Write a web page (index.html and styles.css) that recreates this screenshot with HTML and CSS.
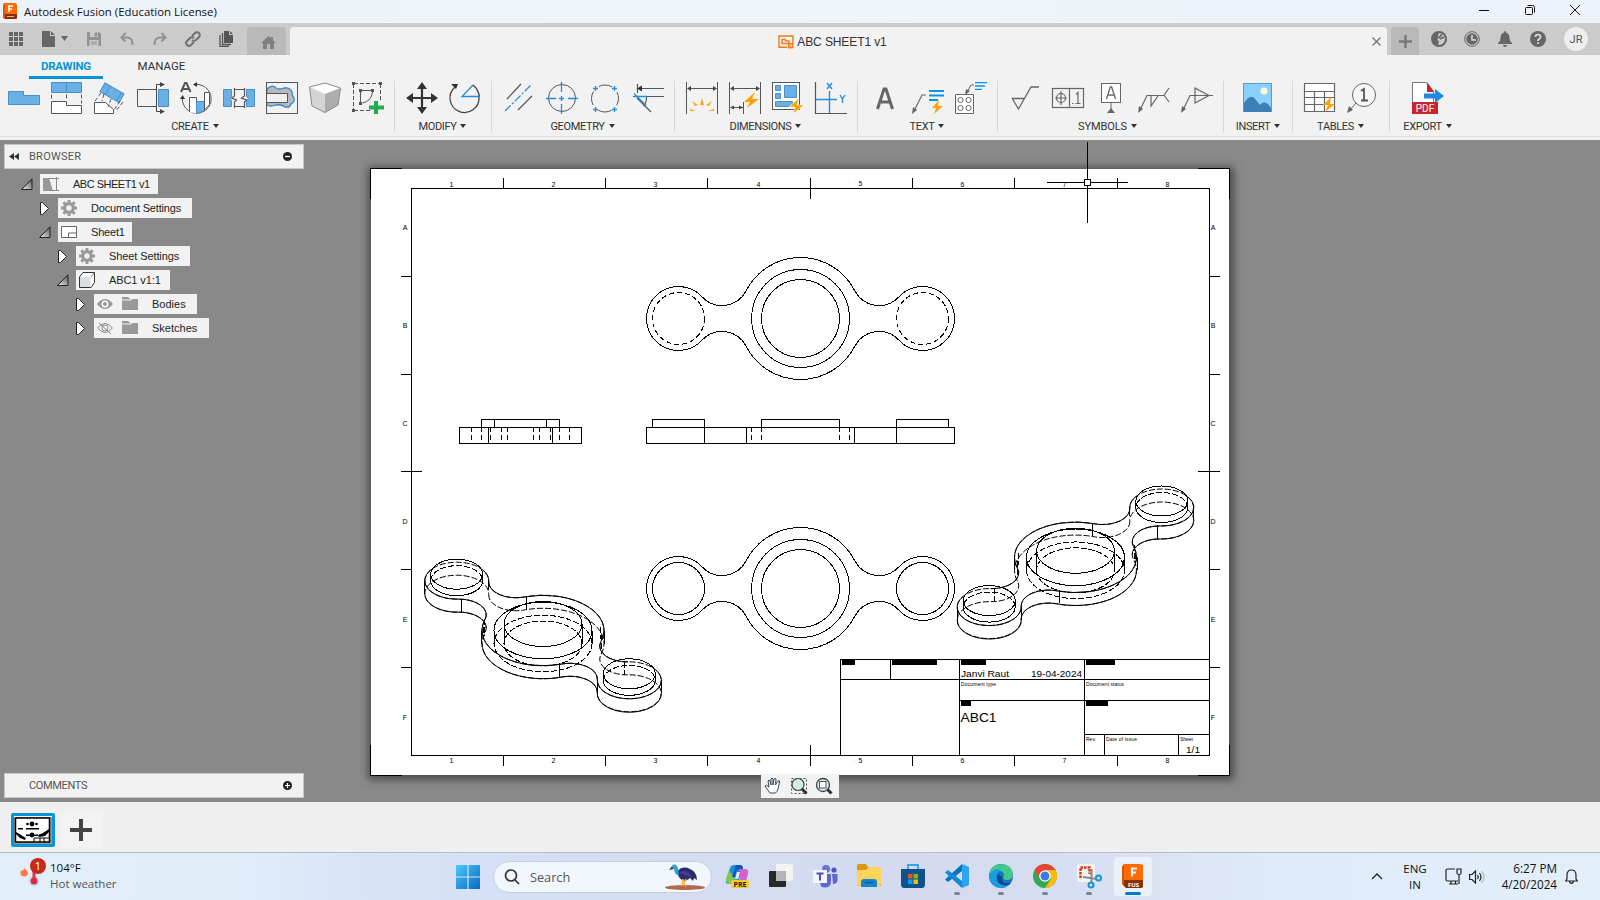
FILE: index.html
```html
<!DOCTYPE html>
<html lang="en">
<head>
<meta charset="utf-8">
<title>Autodesk Fusion (Education License)</title>
<link rel="stylesheet" href="styles.css">
</head>
<body>
<div class="app">
  <header class="titlebar">
    <svg class="logo" width="14" height="17" viewBox="0 0 14 17"><rect width="14" height="16" rx="2" fill="#ff6b00"/><path d="M0 11h14v4a1 1 0 0 1-1 1H2z" fill="#8a3000"/><path d="M2 0 0 3v11l2 2z" fill="#e05500"/><path d="M6 9V3h4M6 6h3" stroke="#fff" stroke-width="1.6" fill="none"/><path d="M4 13.500h7" stroke="#e9b08c"/></svg>
    <span class="title">Autodesk Fusion (Education License)</span>
    <div class="wincontrols">
      <svg width="12" height="12" viewBox="0 0 12 12"><path d="M1 6.500h10"/></svg>
      <svg width="12" height="12" viewBox="0 0 12 12"><rect x="1.500" y="3.500" width="7" height="7" rx="1"/><path d="M3.500 1.500h5a2 2 0 0 1 2 2v5"/></svg>
      <svg width="12" height="12" viewBox="0 0 12 12"><path d="M1 1l10 10M11 1L1 11"/></svg>
    </div>
  </header>

  <div class="tabbar">
    <div class="quick">
      <svg width="14" height="14" viewBox="0 0 14 14" fill="#666"><path d="M0 0h4v4H0zM5 0h4v4H5zM10 0h4v4h-4zM0 5h4v4H0zM5 5h4v4H5zM10 5h4v4h-4zM0 10h4v4H0zM5 10h4v4H5zM10 10h4v4h-4z"/></svg>
      <svg class="q-file" width="27" height="16" viewBox="0 0 27 16" fill="#666"><path d="M0 0h8v5h5v11H0zM9 0l4 4H9zM19 5h7l-3.500 5z"/></svg>
      <svg class="q-save" width="14" height="14" viewBox="0 0 14 14"><path d="M0 0h12l2 2v12H0z" fill="#929292"/><path d="M3 0h8v5H3zM2.500 8h9v6h-9z" fill="#cbcbcb"/><path d="M8 1h2v3H8zM4 10h6M4 12h6" stroke="#929292" fill="#929292"/></svg>
      <svg class="q-undo" width="14" height="14" viewBox="0 0 14 14" fill="none" stroke="#929292" stroke-width="2"><path d="M1.500 5.500h6q5 .5 5 7.500M5.500 1l-4 4.500 4 4"/></svg>
      <svg class="q-redo" width="14" height="14" viewBox="0 0 14 14" fill="none" stroke="#929292" stroke-width="2"><path d="M12.500 5.500h-6q-5 .5-5 7.500M8.500 1l4 4.500-4 4"/></svg>
      <svg class="q-link" width="16" height="16" viewBox="0 0 16 16" fill="none" stroke="#707070" stroke-width="2"><path d="M7 5l3-3a2.700 2.700 0 0 1 4 4l-3 3q-2 1.500-4 0M9 11l-3 3a2.700 2.700 0 0 1-4-4l3-3q2-1.500 4 0"/></svg>
      <svg class="q-copy" width="16" height="16" viewBox="0 0 16 16" fill="#555"><path d="M5 0h5v4h4v8H5zM11 0l3 3h-3z"/><path d="M3.500 2v11.500H12M1 4v11.500h9" fill="none" stroke="#555" stroke-width="1.300"/></svg>
    </div>
    <div class="hometab"><svg width="15" height="13" viewBox="0 0 15 13" fill="#808080"><path d="M7.500 0 0 7h2v6h4V8h3v5h4V7h2l-3-3V1h-2v1z"/></svg></div>
    <div class="doctab">
      <div class="doctitle"><svg width="16" height="14" viewBox="0 0 16 14" fill="none" stroke="#f57c14" stroke-width="1.400"><path d="M9 12.300H1V1h14v7M4 8.500V4.500h3l1 1.500h3v2.500z"/><rect x="10.700" y="8.700" width="4" height="4" fill="#ffc08c"/></svg><span>ABC SHEET1 v1</span></div>
      <svg width="9" height="9" viewBox="0 0 9 9" stroke="#777" stroke-width="1.300"><path d="M.5.500l8 8M8.500.500l-8 8"/></svg>
    </div>
    <div class="newtab"><svg width="13" height="13" viewBox="0 0 13 13" stroke="#777" stroke-width="2.400"><path d="M6.500 0v13M0 6.500h13"/></svg></div>
    <div class="status">
      <svg width="16" height="16" viewBox="0 0 16 16"><circle cx="8" cy="8" r="7" fill="none" stroke="#666" stroke-width="2"/><path d="M1 6Q2 1 8 1l-1 4 1 1.500L6 9l2 1-1 5Q0 14 1 6z" fill="#666"/><path d="M8 7l3-4M9 8l4-2" stroke="#666" stroke-width="1.600"/></svg>
      <svg width="16" height="16" viewBox="0 0 16 16"><circle cx="8" cy="8" r="7.300" fill="none" stroke="#666"/><circle cx="8" cy="8" r="5.800" fill="#666"/><path d="M8 4v5h4" stroke="#ddd" stroke-width="1.500" fill="none"/></svg>
      <svg width="16" height="16" viewBox="0 0 16 16" fill="#666"><path d="M8 0q1 0 1 1.500 3.500 1 3.500 5.500 0 3 2.500 5v1H1v-1q2.500-2 2.500-5Q3.500 2.500 7 1.500 7 0 8 0zM6 14h4q0 2-2 2t-2-2z"/></svg>
      <svg width="16" height="16" viewBox="0 0 16 16"><circle cx="8" cy="8" r="8" fill="#666"/><path d="M5.500 6Q5.500 3.500 8 3.500T10.500 6q0 1.200-1.300 2T8 10M8 11.300v1.700" stroke="#ddd" stroke-width="1.700" fill="none"/></svg>
      <span class="avatar">JR</span>
    </div>
  </div>

  <div class="ribbon">
    <nav class="ribtabs"><span class="on">DRAWING</span><span>MANAGE</span></nav>
    <div class="groups">
      <section class="group first">
        <div class="tools">
          <svg viewBox="0 0 32 32"><path d="M.5 9.500h15v4h16v9H.5z" fill="#68b0e6" stroke="#4c8fc4"/></svg>
          <svg viewBox="0 0 32 32"><path d="M.5.500h30v10H.5zM15.500.500v10" fill="#68b0e6" stroke="#4c8fc4"/><path d="M.5 19.500h15v4h15v8H.5z" fill="#fff" stroke="#555"/><path d="M.5 12.500v6M15.500 12.500v6M30.500 12.500v9" stroke="#555" stroke-dasharray="4 2"/></svg>
          <svg viewBox="0 0 32 32"><g transform="rotate(30 11 1)"><path d="M11 1h22v10H11zM17 1v10M30 1v10" fill="#68b0e6" stroke="#4c8fc4"/></g><path d="M.5 20.500h11l8 7v4H.5z" fill="#fff" stroke="#555"/><path d="M7 11l-6 8M10 12l-2 7M17 17l-3 8M29 20l-7 9M26 19l-6 9" stroke="#555" stroke-dasharray="4 2" fill="none"/></svg>
          <svg viewBox="0 0 32 32"><path d="M19.500 7.500H.5v17h19" fill="none" stroke="#555"/><path d="M21.500 7.500h10v17h-10z" fill="#68b0e6" stroke="#4c8fc4"/><path d="M25 2.500h-5.500v27H25" fill="none" stroke="#444"/><path d="M23 0l5 2.500L23 5zM23 27l5 2.500-5 2.500z" fill="#444"/></svg>
          <svg viewBox="0 0 32 32"><path d="M1 10 5 1h1.500l4 9M3 7h6" fill="none" stroke="#555" stroke-width="2"/><path d="M15 2.500h4A14.500 14.500 0 1 1 2.500 14" fill="none" stroke="#555"/><path d="M13 2.500l4-2.500v5zM0 17l2.500-4L5 17z" fill="#333"/><path d="M9.500 30V15.500h7v16" fill="#fff" stroke="#555"/><path d="M16.500 19.500h8v9l-8 3z" fill="#68b0e6" stroke="#4c8fc4"/><path d="M24.500 28V10.500h5v12z" fill="#fff" stroke="#555"/></svg>
          <svg viewBox="0 0 32 32"><path d="M.5 7.500h8v7l-2 2 2 2v6h-8zM23.500 7.500h8v17h-8v-6l2-2-2-2z" fill="#68b0e6" stroke="#4c8fc4"/><path d="M11.500 6v8l-3 2 5 2-2 2v6M21.500 6v8l-3 2 5 2-2 2v6M12 7.500h9M12 24.500h9" fill="none" stroke="#555" stroke-width="1.200"/></svg>
          <svg viewBox="0 0 32 32"><path d="M1 7q5-5 9-1 4 2 8 0 6-1 8 4 0 4 2 6 1 4-3 6-1 4-6 3-4-3-9-2Q4 25 1 23z" fill="#b9b9b9" stroke="#268cde" stroke-width="1.300"/><path d="M.5 11.500h21v9H.5" fill="#f0f0f0" stroke="#555"/><rect x=".5" y=".5" width="31" height="31" fill="none" stroke="#555"/></svg>
          <svg viewBox="0 0 32 32"><path d="M.5 5 16 1l15.500 5L16 12z" fill="#fff"/><path d="M.5 5 16 12v18.500L3 24z" fill="#d4d4d4"/><path d="M31.500 6 16 12v18.500L29 23z" fill="#adadad"/><path d="M.5 5 16 1l15.500 5L29 23l-13 7.500L3 24z" fill="none" stroke="#888"/></svg>
          <svg viewBox="0 0 32 32"><path d="M2 1.500h26M1.500 2v26M28.500 2v16M2 28.500h18" fill="none" stroke="#555" stroke-dasharray="4 2"/><path d="M0 0h3v3H0zM27 0h3v3h-3zM0 27h3v3H0zM7 7h3v3H7zM19 7h3v3h-3zM7 20h3v3H7z" fill="#555"/><path d="M10 8.500h9M8.500 10v10M20.500 10q-1 9-10 11" fill="none" stroke="#555"/><path d="M22 19h4v4.500h6v4h-6V32h-4v-4.500h-5v-4h5z" fill="#22ab4c"/></svg>
        </div>
        <h2>CREATE</h2>
      </section>
      <section class="group">
        <div class="tools">
          <svg viewBox="0 0 32 32"><path d="M16 4v24M4 16h24" stroke="#333" stroke-width="2.200"/><path d="M16 0l5 7H11zM16 32l5-7H11zM0 16l7-5v10zM32 16l-7-5v10z" fill="#333"/></svg>
          <svg viewBox="0 0 32 32"><path d="M6 5a14.500 14.500 0 1 0 24 10" fill="none" stroke="#444" stroke-width="1.300"/><path d="M2 2l7 0-2 5z" fill="#333"/><path d="M24 3 13 14.500h17.500M24 3" fill="none" stroke="#268cde" stroke-width="1.300"/><path d="M24 3q5 4 6.500 11.500" fill="none" stroke="#444" stroke-width="1.300"/></svg>
        </div>
        <h2>MODIFY</h2>
      </section>
      <section class="group">
        <div class="tools">
          <svg viewBox="0 0 32 32" fill="none"><path d="M4 17 18 2M15 28 29 14" stroke="#555" stroke-width="1.200"/><path d="M2 29 29 2" stroke="#268cde" stroke-dasharray="8 2 2 2" stroke-width="1.300"/></svg>
          <svg viewBox="0 0 32 32" fill="none"><circle cx="16" cy="16" r="13.500" stroke="#555"/><path d="M15.500 0v10M15.500 22v10M0 16.500h10M22 16.500h10M15.500 14v5M13 16.500h5" stroke="#268cde" stroke-width="1.300"/></svg>
          <svg viewBox="0 0 32 32" fill="none"><circle cx="16" cy="16.500" r="13.500" stroke="#555" stroke-dasharray="14 7.200" stroke-dashoffset="7"/><path d="M4 6.500h5M6.500 4v5M23 6.500h5M25.500 4v5M4 27.500h5M6.500 25v5M23 27.500h5M25.500 25v5" stroke="#268cde" stroke-width="1.300"/></svg>
          <svg viewBox="0 0 32 32" fill="none"><path d="M32 6.500H8M5.500 2v9M32 14.500H1M5 16l14 14M14.500 15q0 6-3 9" stroke="#555" stroke-width="1.200"/><path d="M5 6.500l5-3v6z" fill="#333"/><path d="M2 11.500l12 12M2 14.500h13" stroke="#268cde" stroke-width="1.300"/></svg>
        </div>
        <h2>GEOMETRY</h2>
      </section>
      <section class="group">
        <div class="tools">
          <svg viewBox="0 0 32 32"><path d="M.5 0v32M31.500 0v32M2 6.500h28" stroke="#555"/><path d="M1 6.500l4-2.500v5zM31 6.500 27 4v5z" fill="#444"/><path d="M14 23l2-7 2 7zM9 24l-3-5 6 4zM23 24l3-5-6 4zM10 29l-6-2v2zM22 29l6-2v2z" fill="#fca311"/></svg>
          <svg viewBox="0 0 32 32"><path d="M.5 0v32M31.500 0v32M2 6.500h28M2 25.500h12M14.500 20v12" stroke="#555"/><path d="M1 6.500l4-2.500v5zM31 6.500 27 4v5zM1 25.500l4-2v4zM14 25.500l-4-2v4z" fill="#444"/><path d="M26 10 15 20h6l-3 6 12-9h-7z" fill="#ffa000"/></svg>
          <svg viewBox="0 0 32 32"><rect x=".5" y=".5" width="27" height="27" fill="#fff" stroke="#555"/><path d="M3.500 3.500h5v5h-5zM12.500 3.500h12v12h-12zM3.500 11.500h5v5h-5zM3.500 19.500h17v5h-17z" fill="#68b0e6" stroke="#4c8fc4"/><path d="M27 16 17 25h6l-2 7 11-9h-7z" fill="#ffa000" stroke="#fff" stroke-width=".6"/></svg>
          <svg viewBox="0 0 32 32" fill="none"><path d="M.5 0v31.500H32" stroke="#555" stroke-width="1.200"/><path d="M1 17.500h21M14.500 9v22M12 1l5 6M17 1l-5 6M25 13l2.500 4 2.500-4M27.500 17v4" stroke="#268cde" stroke-width="1.400"/></svg>
        </div>
        <h2>DIMENSIONS</h2>
      </section>
      <section class="group">
        <div class="tools">
          <svg viewBox="0 0 32 32"><path d="M8.500 27 15 7h2l6.500 20M11 20h10" fill="none" stroke="#666" stroke-width="3"/></svg>
          <svg viewBox="0 0 32 32"><path d="M2 29l8-16h4" fill="none" stroke="#666" stroke-width="1.200"/><path d="M0 32l1-7 4 3z" fill="#666"/><path d="M17 9h15M17 13.500h15M17 18h9" stroke="#0795ea" stroke-width="2"/><path d="M27 18 20 26h4l-2 6 9-8h-5z" fill="#fca311"/></svg>
          <svg viewBox="0 0 32 32"><path d="M.5 12.500h18v19H.5z" fill="#fff" stroke="#666"/><g fill="none" stroke="#666"><circle cx="5.500" cy="18" r="2.600"/><circle cx="13.500" cy="18" r="2.600"/><circle cx="5.500" cy="26" r="2.600"/><circle cx="13.500" cy="26" r="2.600"/><path d="M12 10l4-7h3"/></g><path d="M10 13l1-6 4 2z" fill="#666"/><path d="M20 .700h12M20 4h10M20 7.300h7" stroke="#0795ea" stroke-width="1.300"/></svg>
        </div>
        <h2>TEXT</h2>
      </section>
      <section class="group symbols">
        <div class="tools">
          <svg viewBox="0 0 32 32"><path d="M3 16.500h13M3 16l6.500 11L22 5h8" fill="none" stroke="#666" stroke-width="1.300"/></svg>
          <svg viewBox="0 0 32 32" fill="none" stroke="#666" stroke-width="1.200"><rect x=".5" y="6.500" width="31" height="19"/><path d="M17.500 7v18M9 9v14M3 16h12M20 21.500h1.500M26 21.500V10.500l-2 2M23.500 21.500h5"/><circle cx="9" cy="16" r="4.500"/></svg>
          <svg viewBox="0 0 32 32"><rect x="6.500" y="1.500" width="19" height="19" fill="#fff" stroke="#666"/><path d="M11.500 17 15.300 5h1.400l3.800 12M13 13h6" fill="none" stroke="#666" stroke-width="1.300"/><path d="M16 21v6" stroke="#666"/><path d="M12 31l4-5 4 5z" fill="#666"/></svg>
          <svg viewBox="0 0 32 32"><path d="M2 28 9 13.500h17L31 6M26 13l5 7M13 14v10l7-10" fill="none" stroke="#666" stroke-width="1.200"/><path d="M0 31l1-7 4 3z" fill="#666"/></svg>
          <svg viewBox="0 0 32 32"><path d="M2 28 9 13.500h23M14 6v15l14-7.500z" fill="none" stroke="#666" stroke-width="1.200"/><path d="M0 31l1-7 4 3z" fill="#666"/></svg>
        </div>
        <h2>SYMBOLS</h2>
      </section>
      <section class="group wide">
        <div class="tools">
          <svg viewBox="0 0 32 32"><rect x="1.500" y="1.500" width="28" height="28" fill="#8bd0ff" stroke="#4c9fd8"/><circle cx="22" cy="9" r="3.500" fill="#fffbd0"/><path d="M2 21q7-11 12-3l4 5q5-6 11 3v4H2z" fill="#3b81b5"/></svg>
        </div>
        <h2>INSERT</h2>
      </section>
      <section class="group">
        <div class="tools">
          <svg viewBox="0 0 32 32"><path d="M.5 1.500h30v28H.5z" fill="#fff"/><path d="M.5 1.500h30v28H.5zM.5 9.500h30M.5 15.500h30M.5 22.500h30M10.500 9.500v20M20.500 9.500v20" fill="none" stroke="#666" stroke-width="1.200"/><path d="M27 15 19 23h5l-3 7 10-8h-5z" fill="#fca311"/></svg>
          <svg viewBox="0 0 32 32"><circle cx="17" cy="13" r="11.500" fill="#f8f8f8" stroke="#666"/><path d="M14 9l3-2v11M14 18.500h7" fill="none" stroke="#555" stroke-width="1.800"/><path d="M9 21l-6 7" stroke="#666"/><path d="M0 31l2-7 4 4z" fill="#666"/></svg>
        </div>
        <h2>TABLES</h2>
      </section>
      <section class="group last">
        <div class="tools">
          <svg viewBox="0 0 32 32"><path d="M.5.500h14l7 9v11H.5z" fill="#fff" stroke="#777"/><path d="M15 0l7 10h-7z" fill="#c9252c"/><path d="M12 11.500h11V7l9 7-9 7v-4.500H12z" fill="#1e88e5"/><path d="M0 20h26v12H0z" fill="#c9252c"/><text x="13" y="29.600" text-anchor="middle" class="pdf">PDF</text></svg>
        </div>
        <h2>EXPORT</h2>
      </section>
    </div>
  </div>

  <main class="workspace">
    <aside class="side">
      <div class="browser">
        <div class="panel"><svg width="10" height="7" viewBox="0 0 10 7"><path d="M5 0v7L0 3.500zM10 0v7L5 3.500z" fill="#333"/></svg><span>BROWSER</span><svg width="9" height="9" viewBox="0 0 9 9"><circle cx="4.500" cy="4.500" r="4.500" fill="#222"/><path d="M2 4.500h5" stroke="#fff" stroke-width="1.300"/></svg></div>
        <ul class="tree">
          <li class="lv0"><svg class="tw"><use href="#open"/></svg><span class="node n-root"><svg><path d="M0 2h6l4 13H0z" fill="#999"/><path d="M6 2.500h10M13.500 1v14M6 14.500h10" stroke="#888" fill="none"/></svg><b>ABC SHEET1 v1</b></span></li>
          <li class="lv1"><svg class="tw"><use href="#shut"/></svg><span class="node n-doc"><svg><use href="#gear"/></svg><b>Document Settings</b></span></li>
          <li class="lv1"><svg class="tw"><use href="#open"/></svg><span class="node n-sheet"><svg><path d="M.5 2.500h15v11H.5zM7.500 13v-4h8" fill="#fff" stroke="#666"/></svg><b>Sheet1</b></span></li>
          <li class="lv2"><svg class="tw"><use href="#shut"/></svg><span class="node n-set"><svg><use href="#gear"/></svg><b>Sheet Settings</b></span></li>
          <li class="lv2"><svg class="tw"><use href="#open"/></svg><span class="node n-part"><svg><path d="M.5 5 4 .500h11.500v10L12 15.500H.500z" fill="#fff" stroke="#333"/><path d="M1 5h10.500v10H1z" fill="#d9dde4"/><path d="M12 5l3-4" stroke="#777"/></svg><b>ABC1 v1:1</b></span></li>
          <li class="lv3"><svg class="tw"><use href="#shut"/></svg><span class="node n-bod"><svg><path d="M0 8q8-10 16 0-8 10-16 0z" fill="#999"/><circle cx="8" cy="8" r="3.500" fill="#fff"/><circle cx="8" cy="8" r="2" fill="#999"/></svg><svg class="folder"><use href="#fold"/></svg><b>Bodies</b></span></li>
          <li class="lv3"><svg class="tw"><use href="#shut"/></svg><span class="node n-sk"><svg fill="none" stroke="#888"><path d="M.5 8q7.500-9 15 0-7.500 9-15 0zM2 3l12 11"/><circle cx="8" cy="8" r="3"/></svg><svg class="folder"><use href="#fold"/></svg><b>Sketches</b></span></li>
        </ul>
      </div>
      <div class="panel comments"><i></i><span>COMMENTS</span><svg width="9" height="9" viewBox="0 0 9 9"><circle cx="4.500" cy="4.500" r="4.500" fill="#222"/><path d="M2 4.500h5M4.500 2v5" stroke="#fff" stroke-width="1.200"/></svg></div>
    </aside>

    <svg class="drawing" width="900" height="662" viewBox="360 140 900 662">
      <defs>
        <filter id="soft" x="-5%" y="-5%" width="110%" height="110%"><feGaussianBlur stdDeviation="4"/></filter>
        <linearGradient id="tri" x1="0" y1="1" x2="1" y2="0"><stop offset="0" stop-color="#eee"/><stop offset="1" stop-color="#555"/></linearGradient>
        <g id="open"><path d="M.500 11.500h10.500V.800z" fill="url(#tri)" stroke="#222"/></g>
        <g id="shut"><path d="M1.500.500v12h2L9.500 6.500l-6-6z" fill="#fff" stroke="#222"/></g>
        <g id="gear"><circle cx="8" cy="8" r="4.300" fill="none" stroke="#999" stroke-width="3.200"/><path d="M8 0v3M8 13v3M0 8h3M13 8h3M2.300 2.300l2 2M11.700 11.700l2 2M13.700 2.300l-2 2M2.300 13.700l2-2" stroke="#999" stroke-width="3"/></g>
        <g id="fold"><path d="M0 1h6l2 2h8v11H0z" fill="#999"/><path d="M0 4h9l1-1" stroke="#f2f2f2" fill="none"/></g>
        <path id="plate" d="M-98.500-21.700A27.250 27.250 0 0 0-54.300-27.800A61 61 0 0 1 54.300-27.800A27.250 27.250 0 0 0 98.500-21.700A32 32 0 1 1 98.500 21.700A27.250 27.250 0 0 0 54.300 27.800A61 61 0 0 1-54.300 27.800A27.250 27.250 0 0 0-98.500 21.700A32 32 0 1 1-98.500-21.700Z"/>
        <g id="spinner">
          <g transform="matrix(.7071 .4082 -.7071 .4082 0 0)">
            <use href="#plate" class="hid long"/>
            <path d="M-116.400-31.500A32 32 0 0 1-98.500-21.700A27.250 27.250 0 0 0-54.300-27.800A61 61 0 0 1 54.300-27.800A27.250 27.250 0 0 0 98.500-21.700M127.600-31.500A32 32 0 1 1 98.500 21.700A27.250 27.250 0 0 0 54.300 27.800A61 61 0 0 1-54.300 27.800A27.250 27.250 0 0 0-98.500 21.700A32 32 0 0 1-153.500 5.600"/>
          </g>
          <g transform="matrix(.7071 .4082 -.7071 .4082 0 13)">
            <use href="#plate" class="hid long"/>
            <path d="M-59.200 21A27.250 27.250 0 0 0-98.500 21.700A32 32 0 0 1-144.600 22.600M-43.100 43.100A61 61 0 0 0 54.300 27.800A27.250 27.250 0 0 1 98.500 21.700A32 32 0 1 0 144.600-22.600"/>
          </g>
          <ellipse cx="-86.300" cy="-56.300" rx="26" ry="15"/>
          <ellipse cx="86.300" cy="43.300" rx="26" ry="15"/>
          <ellipse cy="-6.500" rx="39" ry="22.500"/>
          <path d="M-112.300-49.800a26 15 0 0 0 52 0M60.300 49.800a26 15 0 0 0 52 0"/>
          <path class="hid long" d="M-112.300-49.800a26 15 0 0 1 52 0M60.300 49.800a26 15 0 0 1 52 0"/>
          <ellipse rx="49" ry="28.300"/>
          <ellipse class="hid long" cy="13" rx="49" ry="28.300"/>
          <ellipse class="hid long" cy="13" rx="39" ry="22.500"/>
          <path d="M-118.300-49.800v13M-54.300-49.800v9M-61.500 0v13M61.500 0v13M54.300 49.800v13M118.300 49.800v13M-112.300-56.300v7M-60.300-56.300v7M60.300 43.300v7M112.300 43.300v7M-39-6.500v20M39-6.500v20M-49 0v13M49 0v13M-81.700-32v14M-16.700-34v13M16.300 33v13"/>
          <path class="hid long" d="M81.300 31v13M-58.500-12v17M-59.500-4v12M58.500 4v17M57.500-4v12"/>
        </g>
      </defs>
      <rect x="368" y="167" width="866" height="613" fill="#4c4c4c" filter="url(#soft)"/>
      <rect x="371" y="169" width="858" height="606" fill="#fff"/>
      <g class="ink">
        <path d="M402 168.500H370.500V199M1198 168.500h31.500V199M402 775.500H370.500V745M1198 775.500h31.500V745"/>
        <path d="M411.500 188.500h798v567h-798z"/>
        <path d="M503.500 178v10M605.500 178v10M707.500 178v10M810.500 178v21M912.500 178v10M1014.500 178v10M1117.500 178v10M503.500 756v10M605.500 756v10M707.500 756v10M810.500 745v21M912.500 756v10M1014.500 756v10M1117.500 756v10"/>
        <path d="M401 276.500h10M401 374.500h10M401 471.500h21M401 569.500h10M401 667.500h10M1210 276.500h10M1210 374.500h10M1198 471.500h22M1210 569.500h10M1210 667.500h10"/>
        <g transform="translate(800.500 318.500)"><use href="#plate"/><circle r="49"/><circle r="39"/><circle cx="-122" r="26" class="hid"/><circle cx="122" r="26" class="hid"/></g>
        <g transform="translate(800.500 588.500)"><use href="#plate"/><circle r="49"/><circle r="39"/><circle cx="-122" r="26"/><circle cx="122" r="26"/></g>
        <path d="M646.500 427.500h308v16h-308zM652.500 427.500v-8h52v24M761.500 427.500v-8h78v8M896.500 443.500v-24h52v8M746.500 427v16M854.500 427v16"/>
        <path class="hid" d="M751.500 427v16M761.500 427v16M839.500 427v16M849.500 427v16"/>
        <path d="M459.500 427.500h122v16h-122zM481.500 427.500v-8h78v8M494.500 419v8M546.500 419v8M488.500 427v16M552.500 427v16"/>
        <path class="hid" d="M471.500 427v16M481.500 427v16M490.500 427v16M501.500 427v16M507.500 427v16M533.500 427v16M539.500 427v16M550.500 427v16M559.500 427v16M569.500 427v16"/>
        <use href="#spinner" transform="translate(543 630.500)"/>
        <use href="#spinner" transform="translate(1075.500 557.300) scale(-1 1)"/>
        <path d="M840.500 755V659.500h369M840.500 679.500h369M890.500 659v20M959.500 659v96M1084.500 659v96M959 700.500h250M1084 734.500h125M1104.500 734v21M1178.500 734v21"/>
      </g>
      <path d="M842 660h13v5h-13zM892 660h45v5h-45zM961 660h25v5h-25zM1086 660h29v5h-29zM961 701h10v5h-10zM1086 701h22v5h-22z"/>
      <g class="zone">
        <text x="451.500" y="187">1</text><text x="553.500" y="187">2</text><text x="655.500" y="187">3</text><text x="758.500" y="187">4</text><text x="860.500" y="186">5</text><text x="962.500" y="187">6</text><text x="1064.500" y="187">7</text><text x="1167.500" y="187">8</text>
        <text x="451.500" y="763">1</text><text x="553.500" y="763">2</text><text x="655.500" y="763">3</text><text x="758.500" y="763">4</text><text x="860.500" y="763">5</text><text x="962.500" y="763">6</text><text x="1064.500" y="763">7</text><text x="1167.500" y="763">8</text>
        <text x="405" y="230">A</text><text x="405" y="328">B</text><text x="405" y="426">C</text><text x="405" y="524">D</text><text x="405" y="622">E</text><text x="405" y="720">F</text>
        <text x="1213" y="230">A</text><text x="1213" y="328">B</text><text x="1213" y="426">C</text><text x="1213" y="524">D</text><text x="1213" y="622">E</text><text x="1213" y="720">F</text>
      </g>
      <g class="block">
        <text x="961" y="677" textLength="48" lengthAdjust="spacingAndGlyphs">Janvi Raut</text><text x="1031" y="677" textLength="51" lengthAdjust="spacingAndGlyphs">19-04-2024</text>
        <text x="960.500" y="722" class="big" textLength="36" lengthAdjust="spacingAndGlyphs">ABC1</text><text x="1186" y="753" textLength="14" lengthAdjust="spacingAndGlyphs">1/1</text>
        <g class="tiny"><text x="961" y="686" textLength="35">Document type</text><text x="1086" y="686" textLength="38">Document status</text><text x="1086" y="741">Rev.</text><text x="1106" y="741" textLength="31">Date of issue</text><text x="1180" y="741" textLength="13">Sheet</text></g>
      </g>
      <g class="ink"><path d="M1047 182.500h81M1087.500 142v81"/><rect x="1084.500" y="179.500" width="6" height="6" fill="#fff"/></g>
    </svg>

    <div class="navbar">
      <svg width="18" height="18" viewBox="0 0 18 18"><path d="M6 16Q3 12 1 9q1-2 4 1L4 4q1-2 2 0l1 4V2q1-2 2 0v6l1-6q1-1 2 0l-.5 6L14 4q2-1 1.500 1L14 12q-1 3-2.500 4z" fill="#fff" stroke="#3a4550"/></svg>
      <svg width="18" height="18" viewBox="0 0 18 18"><path d="M1.500 1.500h15v15h-15z" fill="none" stroke="#555" stroke-dasharray="2 2"/><circle cx="8" cy="7.500" r="6" fill="#d7eaea" stroke="#444" stroke-width="1.200"/><path d="M12 12l4.500 4.500" stroke="#333" stroke-width="3"/></svg>
      <svg width="18" height="18" viewBox="0 0 18 18"><circle cx="8" cy="8" r="6.500" fill="#d7eaef" stroke="#444" stroke-width="1.300"/><rect x="4.500" y="4.500" width="6.500" height="6.500" fill="#fff" stroke="#555"/><path d="M12.500 12.500l4 4" stroke="#333" stroke-width="3"/></svg>
    </div>
  </main>

  <div class="sheets">
    <div class="thumb"><svg width="38" height="27" viewBox="0 0 38 27"><rect width="38" height="27" fill="#999"/><rect x="1.500" y="1" width="34" height="24" fill="#fff" stroke="#000" stroke-width="1.500"/><g fill="#000"><circle cx="18" cy="7" r="2.400"/><circle cx="13.500" cy="7" r="1.300"/><circle cx="22.500" cy="7" r="1.300"/><circle cx="18" cy="18" r="2.400"/><path d="M12 17.500h12v1.500H12zM4 11h5v1.500H4zM12 11h13v1.500H12zM2 15l5 3 5 3-1 2-5-2-4-4zM35 12l-6 4-5 2 1 2 6-1 4-4z"/></g><path d="M20 25v-4h15M26 21v4M30 21v4" fill="none" stroke="#000"/></svg></div>
    <div class="addsheet"><svg width="22" height="22" viewBox="0 0 22 22" stroke="#444" stroke-width="4"><path d="M11 0v22M0 11h22"/></svg></div>
  </div>

  <footer class="taskbar">
    <div class="weather">
      <svg width="28" height="30" viewBox="0 0 28 30"><path d="M4 10q4 3 4 6a4 4 0 0 1-7.500 0Q0 13 2 12l1 1z" fill="#ff7a3d"/><circle cx="14" cy="23" r="5.500" fill="#c9dff0"/><path d="M14 8v14" stroke="#e0364c" stroke-width="3"/><circle cx="14" cy="23" r="3.500" fill="#d92b45"/><circle cx="18" cy="8" r="8" fill="#c42b1c"/><text x="18" y="12" text-anchor="middle" class="badge">1</text></svg>
      <div><p>104°F</p><p class="dim">Hot weather</p></div>
    </div>
    <div class="dock">
      <svg width="24" height="24" viewBox="0 0 24 24"><defs><linearGradient id="win" x1="0" y1="0" x2="1" y2="1"><stop offset="0" stop-color="#4cc8f8"/><stop offset="1" stop-color="#0669c4"/></linearGradient></defs><path d="M0 0h11.400v11.400H0zM12.600 0H24v11.400H12.600zM0 12.600h11.400V24H0zM12.600 12.600H24V24H12.600z" fill="url(#win)"/></svg>
      <div class="search">
        <svg width="16" height="16" viewBox="0 0 16 16" fill="none" stroke="#333" stroke-width="1.700"><circle cx="7" cy="6.500" r="5.500"/><path d="M11 11l4 4"/></svg><span>Search</span>
        <svg width="40" height="26" viewBox="0 0 40 26"><ellipse cx="20" cy="23.500" rx="20" ry="2.500" fill="#b4694a"/><path d="M12 8q5-7 13-3 7 3 7 11l-3-2-1 3-3-3q-4 4-8 2-4-3-5-8z" fill="#2b2c6b"/><path d="M14 9q5-4 10 0l3 5q-8-4-13-5z" fill="#4a3a8c"/><path d="M7 1q5-2 6 4l1 7q-5-2-5-7z" fill="#26a6d8"/><path d="M7 2l-3 4 5-1z" fill="#444"/><path d="M18 15l-1 7M21 15l-2 4 2 4" stroke="#f2b63c" stroke-width="1.500" fill="none"/></svg>
      </div>
      <div class="apps">
        <div class="task"><svg viewBox="0 0 24 24"><path d="M9 1h6q3 0 2 3l-3 12q-1 4-5 4H4q-4 0-3-4L5 4q1-3 4-3z" fill="#1c8fd8"/><path d="M1 15l3-9 8 12q-1 2-3 2H4q-3-1-3-5z" fill="#7fc94b"/><path d="M15 5h5q4 0 3 5l-2 7q-1 4-5 4h-5q3-2 4-7z" fill="#d75fd0"/><path d="M11 1h4q3 0 3 4h-3q-3 0-4 4l-1 4H7z" fill="#1854c0"/><path d="M12 8h3l-2 7h-3z" fill="#e9effa"/><rect x="6" y="16" width="18" height="8" rx="2" fill="#ffca28"/><text x="15" y="22.500" text-anchor="middle" class="pre">PRE</text></svg></div>
        <div class="task"><svg viewBox="0 0 24 24"><rect x="7" y="0" width="17" height="17" rx="1" fill="#f3f3f3"/><rect x="0" y="7" width="17" height="16" rx="1" fill="#292929"/><path d="M7 7h10v10H7z" fill="#b5b5b5"/></svg></div>
        <div class="task"><svg viewBox="0 0 24 24"><circle cx="13" cy="5" r="4" fill="#6b73dc"/><circle cx="21" cy="6" r="2.600" fill="#4b53bc"/><path d="M7 10h11v8q0 5-5.500 5.500T7 18zM19 10h5.500v7q-1 3-4.500 3z" fill="#6068d0"/><rect x="0" y="6" width="14" height="13" fill="#f5f5ff"/><path d="M3.500 9.500h7M7 9.500v7" stroke="#464eb8" stroke-width="2"/></svg></div>
        <div class="task"><svg viewBox="0 0 24 24"><path d="M0 2q0-2 2-2h7l2 3h13v19H0z" fill="#d79a10"/><path d="M0 6h9l3-3h12v17q0 2-2 2H2q-2 0-2-2z" fill="#ffd35a"/><path d="M4 23v-5q0-3 3-3h10q3 0 3 3v5z" fill="#1583cc"/><path d="M8 18.500h8" stroke="#0b5d9a" stroke-width="1.500"/></svg></div>
        <div class="task"><svg viewBox="0 0 24 24"><path d="M7 6V1h10v5" fill="none" stroke="#37a6e6" stroke-width="2"/><path d="M0 5h24v15q0 4-3 4H3q-3 0-3-4z" fill="#0d538c"/><path d="M7 10h4.500v4.500H7z" fill="#f25022"/><path d="M12.500 10H17v4.500h-4.500z" fill="#7fba00"/><path d="M7 15.500h4.500V20H7z" fill="#00a4ef"/><path d="M12.500 15.500H17V20h-4.500z" fill="#ffb900"/></svg></div>
        <div class="task run"><svg viewBox="0 0 24 24"><path d="M17 0l7 3v18l-7 3z" fill="#2ba5ee"/><path d="M17 0v7L3 18l-3-2.500z" fill="#0872bb"/><path d="M17 24v-7L3 6 0 8.500z" fill="#1489d6"/></svg></div>
        <div class="task run"><svg viewBox="0 0 24 24"><circle cx="12" cy="12" r="12" fill="#1673c7"/><path d="M0 11Q2 0 13 0q10 1 11 10 0 6-7 6-4-1-2-4 0-5-5-5-7 0-10 4z" fill="#42c98c"/><path d="M0 12Q4 3 12 6q-6 4-4 10 3 8 12 5-8 6-15 0Q0 17 0 12z" fill="#1b9de2"/><path d="M9 10q-3 10 6 11 4 1 7-2-10 2-9-6z" fill="#0d4796"/></svg></div>
        <div class="task run"><svg viewBox="0 0 24 24"><circle cx="12" cy="12" r="12" fill="#34a853"/><path d="M12 12 1.600 6A12 12 0 0 1 22.400 6z" fill="#ea4335"/><path d="M12 6h10.400A12 12 0 0 1 12 24l6-9z" fill="#fbbc05"/><path d="M1.600 6 7 15l5-9z" fill="#ea4335"/><circle cx="12" cy="12" r="5.800" fill="#fff"/><circle cx="12" cy="12" r="4.500" fill="#3b7de8"/></svg></div>
        <div class="task run"><svg viewBox="0 0 24 24"><rect width="18" height="18" rx="2" fill="#f4f4f4"/><path d="M3.500 14V3.500h9V10" fill="none" stroke="#d83b01" stroke-width="2.500" stroke-dasharray="2.500 1"/><path d="M14.500 5v14M6 13l14 2" stroke="#888" stroke-width="2"/><circle cx="21.500" cy="14" r="2.500" fill="none" stroke="#1296d8" stroke-width="2"/><circle cx="14" cy="21" r="2.500" fill="none" stroke="#1296d8" stroke-width="2"/></svg></div>
        <div class="task active"><svg viewBox="0 0 24 24"><path d="M3 0h16q3 0 3 2v20q0 2-3 2H5l-4-4V3z" fill="#ff6b00"/><path d="M3 16h19v6q0 2-3 2H5l-2-2z" fill="#8a3000"/><path d="M3 0 1 3v17l2 2z" fill="#d35400"/><path d="M11 12.500V4.500h5M11 8.500h4" fill="none" stroke="#fff" stroke-width="2"/><text x="12.500" y="22.500" text-anchor="middle" class="fus">FUS</text></svg></div>
      </div>
    </div>
    <div class="tray">
      <svg width="12" height="7" viewBox="0 0 12 7" fill="none" stroke="#222" stroke-width="1.300"><path d="M1 6l5-5 5 5"/></svg>
      <div class="lang"><p>ENG</p><p>IN</p></div>
      <svg class="net" width="17" height="17" viewBox="0 0 17 17" fill="none" stroke="#222" stroke-width="1.200"><path d="M10 1H2.500Q1 1 1 2.500v9Q1 13 2.500 13H13M4 16h9M6 13v3M10.500 13v3M12 1h4v4q0 1.500-2 1.500T12 5zM14 7v9"/></svg>
      <svg class="vol" width="16" height="14" viewBox="0 0 16 14" fill="none" stroke="#222" stroke-width="1.200"><path d="M.6 4.500H3L6.500 1v12L3 9.500H.6zM8.500 5q1.500 2 0 4M10.500 3q3 4 0 8"/><path d="M12.500 1q5 6 0 12" stroke="#bbb"/></svg>
      <div class="clock"><p>6:27 PM</p><p>4/20/2024</p></div>
      <svg class="bell" width="13" height="15" viewBox="0 0 13 15" fill="none" stroke="#222" stroke-width="1.200"><path d="M2 10V6q0-5 4.500-5T11 6v4l1.400 2H.6zM4.500 12.500q.5 1.900 2 1.900t2-1.900"/></svg>
    </div>
  </footer>
</div>
</body>
</html>
```
FILE: styles.css
```css
* { box-sizing: border-box; }
body, p, h2, ul { margin: 0; padding: 0; }
body { font-family: "Liberation Sans", Arial, sans-serif; font-size: 11px; color: #333; overflow: hidden; }
svg { display: block; flex: none; }
.app { width: 1600px; height: 900px; display: flex; flex-direction: column; }

.titlebar { height: 23px; background: linear-gradient(90deg, #eef3fb, #eef4f8 55%, #eef3fb 75%); display: flex; align-items: center; padding-left: 3px; }
.title { font: 11.400px "Open Sans", "Noto Sans", sans-serif; color: #111; margin-left: 7px; flex: 1; }
.wincontrols { display: flex; gap: 33.500px; padding: 0 19px 3px 0; fill: none; stroke: #111; }

.tabbar { height: 32px; background: #cbcbcb; display: flex; align-items: flex-end; }
.quick { width: 247px; height: 32px; display: flex; align-items: center; padding-left: 9px; }
.q-file { margin-left: 19px; }
.q-save { margin-left: 18px; }
.q-undo, .q-redo { margin-left: 19px; }
.q-link { margin-left: 18px; }
.q-copy { margin-left: 18px; }
.hometab { width: 39px; height: 28px; background: #b9b9b9; border-radius: 4px 4px 0 0; display: flex; align-items: center; justify-content: center; padding: 3px 0 0 3px; }
.doctab { width: 1097px; height: 28px; margin-left: 4px; background: #f2f2f2; border-radius: 4px 4px 0 0; display: flex; align-items: center; padding-right: 6px; }
.doctitle { flex: 1; display: flex; align-items: center; justify-content: center; gap: 3px; font-size: 12px; letter-spacing: -.1px; padding: 1px 0 0 3px; }
.newtab { width: 28px; height: 28px; margin-left: 4px; background: #b9b9b9; border-radius: 4px 4px 0 0; display: flex; align-items: center; justify-content: center; }
.status { height: 32px; flex: 1; display: flex; align-items: center; gap: 17px; padding-left: 12px; }
.avatar { width: 24px; height: 24px; margin-left: 1px; border-radius: 50%; background: #eee; display: flex; align-items: center; justify-content: center; font: 11px Roboto, sans-serif; color: #555; }

.ribbon { height: 85px; background: #f2f2f2; position: relative; }
.ribbon::after { content: ""; position: absolute; left: 0; right: 0; top: 81px; height: 1px; background: #dcdcdc; }
.ribtabs { height: 24px; display: flex; padding-left: 29px; font: 11.500px Roboto, sans-serif; }
.ribtabs span { width: 75px; height: 24px; padding-top: 4px; text-align: center; }
.ribtabs span + span { margin-left: 20px; }
.ribtabs .on { width: 74px; margin-right: 1px; letter-spacing: -.25px; color: #0696d7; font-weight: 700; border-bottom: 3px solid #0696d7; }
.groups { display: flex; padding-top: 2px; }
.group { height: 51px; padding: 0 5px; border-right: 1px solid #d8d8d8; display: flex; flex-direction: column; align-items: center; }
.group.first { padding: 0 5px 0 2px; }
.group.wide { width: 69px; }
.group.last { border: 0; width: 76px; }
.tools { display: flex; }
.tools svg { width: 32px; height: 32px; margin: 1px 5.500px 0; overflow: visible; }
.group h2 { font: 11px/15px Roboto, sans-serif; letter-spacing: -.35px; margin: 5px 1px 0 0; white-space: nowrap; }
.group.symbols h2 { margin-right: 6px; letter-spacing: -.1px; }
.group.wide h2 { margin-right: 0; }
.group h2::after { content: ""; display: inline-block; border: 3px solid transparent; border-top: 4px solid #333; border-bottom: 0; margin: 0 0 2px 4px; }
.pdf { font: 10px Roboto, sans-serif; fill: #fff; }

.workspace { height: 662px; background: #898989; display: flex; position: relative; }
.side { width: 360px; padding: 4px 56px 4px 4px; display: flex; flex-direction: column; justify-content: space-between; }
.panel { height: 25px; background: #f2f2f2; border: 1px solid #c8c8c8; display: flex; align-items: center; padding: 0 11px 0 4px; font: 11px Roboto, sans-serif; color: #555; }
.panel span { flex: 1; margin-left: 10px; letter-spacing: .25px; }
.panel.comments span { letter-spacing: -.35px; }
.panel i { width: 10px; }
.tree { list-style: none; padding-top: 3px; }
.tree li { height: 24px; display: flex; align-items: center; }
.tree .tw { width: 12px; height: 13px; margin-right: 7px; }
.lv0 { padding-left: 17px; }
.lv1 { padding-left: 35px; }
.lv2 { padding-left: 53px; }
.lv3 { padding-left: 71px; }
.node { height: 20px; background: #f2f2f2; display: flex; align-items: center; padding-left: 3px; }
.node svg { width: 16px; height: 16px; }
.node b { font-weight: 400; margin-left: 14px; color: #222; white-space: nowrap; }
.node .folder { margin-left: 9px; }
.n-root { width: 118px; letter-spacing: -.5px; }
.n-doc { width: 134px; letter-spacing: -.17px; }
.n-sheet { width: 74px; letter-spacing: -.2px; }
.n-set { width: 114px; letter-spacing: -.1px; }
.n-part { width: 94px; letter-spacing: -.1px; }
.n-bod { width: 103px; }
.n-sk { width: 115px; }
.drawing { overflow: visible; }
.ink { fill: none; stroke: #000; shape-rendering: crispEdges; }
.ink path, .ink circle, .ink ellipse, .ink use { vector-effect: non-scaling-stroke; }
#plate, #spinner path { vector-effect: non-scaling-stroke; }
.hid { stroke-dasharray: 5 3; }
.long { stroke-dasharray: 6 2; }
.zone { font-size: 7px; text-anchor: middle; fill: #000; }
.block { font-size: 9.500px; fill: #000; }
.big { font-size: 13.500px; }
.tiny { font-size: 5px; }
.navbar { position: absolute; left: 761px; top: 634px; width: 78px; height: 24px; background: #f2f2f2; display: flex; align-items: center; justify-content: space-between; padding: 0 6px 0 3px; }

.sheets { height: 50px; background: #f0f0f0; display: flex; align-items: center; padding: 6px 0 0 11px; gap: 4px; }
.thumb { width: 44px; height: 34px; border: 3px solid #0696d7; border-radius: 2px; display: flex; align-items: center; justify-content: center; background: #fff; }
.addsheet { width: 43px; height: 34px; background: #f3f3f3; display: flex; align-items: center; justify-content: center; }

.taskbar { height: 48px; border-top: 1px solid #b4bcc8; background: linear-gradient(90deg, #e2eef8 0, #e1edf9 15%, #d9e4f8 22%, #d3dff5 35%, #d5daee 58%, #d8dff2 68%, #dfebf9 80%, #e2eef9); display: flex; font: 11.500px/16px "Open Sans", "Noto Sans", sans-serif; color: #111; }
.weather { width: 456px; display: flex; padding: 7px 0 0 20px; gap: 2px; }
.weather svg { margin-top: -2px; }
.dim { color: #555; }
.badge { font: 11px "Open Sans", sans-serif; fill: #fff; }
.dock { width: 704px; display: flex; align-items: center; }
.search { width: 219px; height: 32px; margin-left: 13px; border-radius: 16px; background: #f2f6fd; border: 1px solid #c6cfe0; display: flex; align-items: center; padding: 0 6px 0 10px; font-size: 12.700px; color: #555; }
.search span { flex: 1; margin-left: 10px; }
.apps { display: flex; margin-left: 6px; gap: 6px; }
.task { width: 38px; height: 39px; border-radius: 4px; display: flex; flex-direction: column; align-items: center; padding-top: 7px; }
.task svg { width: 24px; height: 24px; overflow: visible; }
.run::after { content: ""; width: 6px; height: 3px; border-radius: 2px; background: #7b8290; margin-top: 4px; }
.active { background: #ecf0f9; }
.active::after { content: ""; width: 16px; height: 3px; border-radius: 2px; background: #0078d4; margin-top: 4px; }
.pre { font: bold 7px "Open Sans", sans-serif; fill: #222; }
.fus { font: bold 6px "Open Sans", sans-serif; fill: #fff; }
.tray { flex: 1; display: flex; align-items: center; padding-left: 211px; }
.lang { width: 26px; text-align: center; margin-left: 19px; }
.net { margin-left: 17px; }
.vol { margin-left: 7px; }
.clock { width: 60px; text-align: right; margin-left: 12px; font-size: 11.700px; margin-top: -2px; white-space: nowrap; }
.bell { margin-left: 8px; }
```
